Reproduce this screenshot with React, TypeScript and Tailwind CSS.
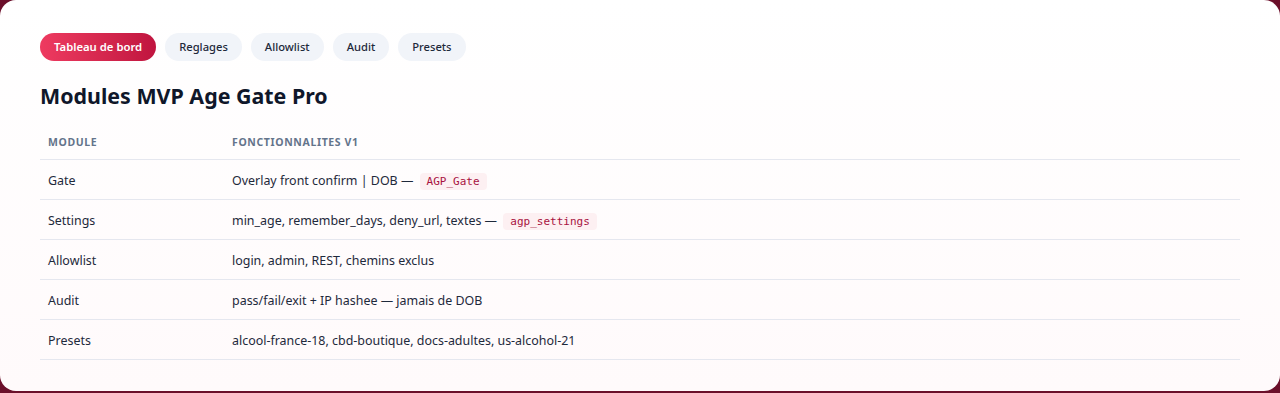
import React from 'react';

const tabs = ['Tableau de bord', 'Reglages', 'Allowlist', 'Audit', 'Presets'];

type Row = { module: string; text: string; code?: string };

const rows: Row[] = [
  { module: 'Gate', text: 'Overlay front confirm | DOB — ', code: 'AGP_Gate' },
  { module: 'Settings', text: 'min_age, remember_days, deny_url, textes — ', code: 'agp_settings' },
  { module: 'Allowlist', text: 'login, admin, REST, chemins exclus' },
  { module: 'Audit', text: 'pass/fail/exit + IP hashee — jamais de DOB' },
  { module: 'Presets', text: 'alcool-france-18, cbd-boutique, docs-adultes, us-alcohol-21' },
];

export default function App() {
  return (
    <div className="h-[393px] w-full overflow-hidden bg-[#6b0f2a] font-['Noto_Sans',sans-serif]">
      <div className="h-[391px] rounded-2xl bg-gradient-to-b from-white to-[#fffafb] px-10 pt-[33px]">
        <div className="flex gap-[9px]">
          {tabs.map((t, i) => (
            <button
              key={t}
              className={
                i === 0
                  ? 'h-7 rounded-full bg-gradient-to-r from-[#ee3a60] to-[#c0143f] px-[14px] text-[11.3px] font-semibold text-white'
                  : 'h-7 rounded-full bg-[#f1f4f9] px-[14px] text-[11.2px] font-medium text-[#1e293b]'
              }
            >
              {t}
            </button>
          ))}
        </div>

        <h1 className="mt-[21px] text-[21.4px] font-bold leading-7 text-[#0f172a]">Modules MVP Age Gate Pro</h1>

        <table className="mt-[9px] w-full border-collapse text-left">
          <thead>
            <tr className="border-b border-[#e5e7ef]">
              <th className="h-10 w-[184px] px-2 pb-2 align-bottom text-[10.5px] font-bold uppercase tracking-[0.06em] text-[#64748b]">Module</th>
              <th className="h-10 px-2 pb-2 align-bottom text-[10.5px] font-bold uppercase tracking-[0.06em] text-[#64748b]">Fonctionnalites V1</th>
            </tr>
          </thead>
          <tbody>
            {rows.map(r => (
              <tr key={r.module} className="border-b border-[#e5e7ef]">
                <td className="h-10 px-2 pt-1 text-[12.45px] text-[#1e293b]">{r.module}</td>
                <td className="h-10 px-2 pt-1 text-[12.45px] text-[#1e293b]">
                  {r.text}
                  {r.code && (
                    <code className="ml-[3px] rounded bg-[#fdf0f2] px-[7px] py-[2px] font-['DejaVu_Sans_Mono',monospace] text-[11px] text-[#a8123f]">
                      {r.code}
                    </code>
                  )}
                </td>
              </tr>
            ))}
          </tbody>
        </table>
      </div>
    </div>
  );
}
